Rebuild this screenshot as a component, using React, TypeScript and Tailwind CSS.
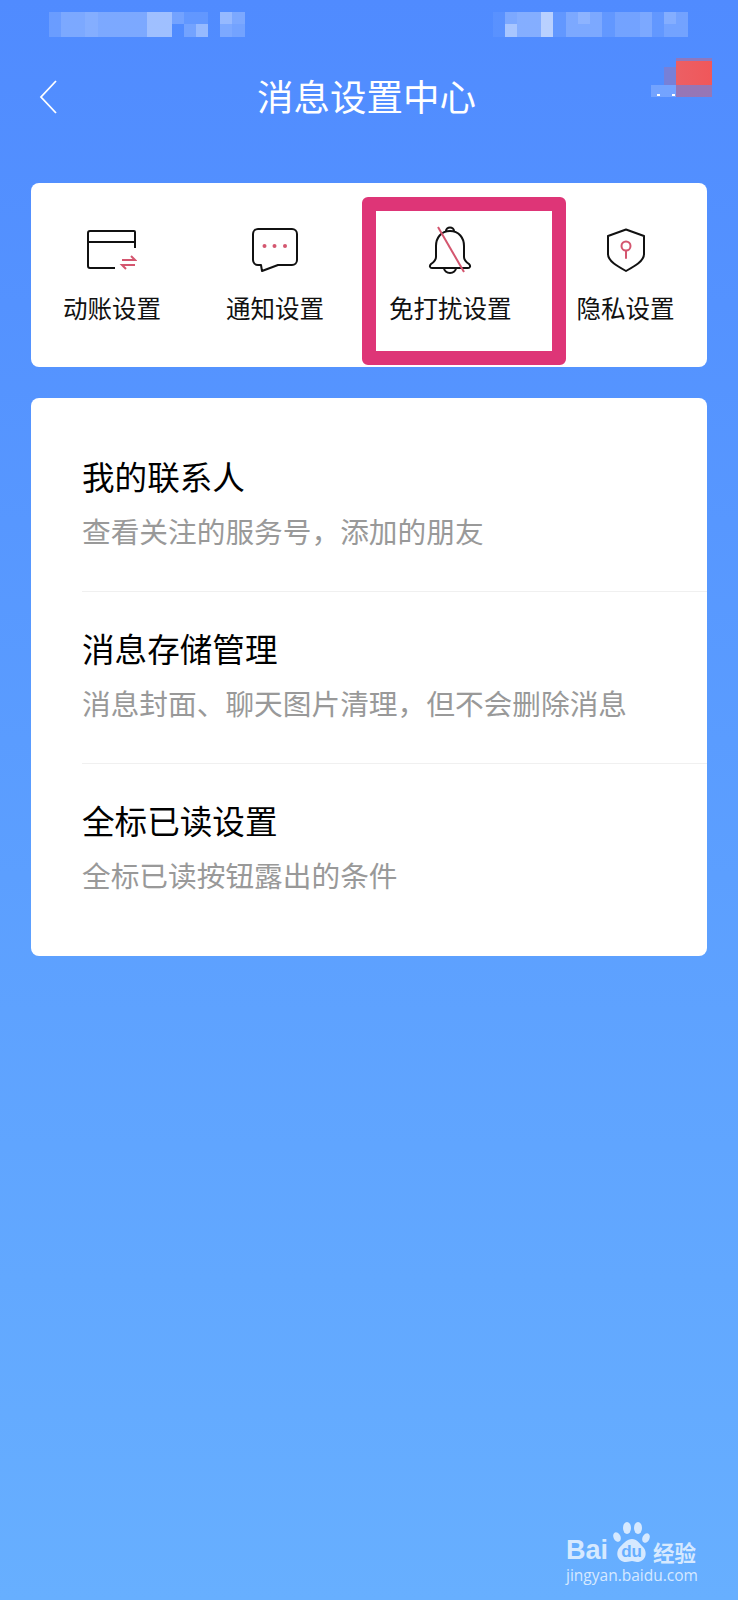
import React from 'react'

const font = { fontFamily: '"Noto Sans CJK SC", "Noto Sans", sans-serif' }
const latin = { fontFamily: '"Liberation Sans", sans-serif' }

// 状态栏马赛克：宽度、上半格、下半格
const leftMosaic = [
  ['w-[12px]', 'bg-white/15', 'bg-white/15'],
  ['w-[24px]', 'bg-white/25', 'bg-white/25'],
  ['w-[13px]', 'bg-white/30', 'bg-white/30'],
  ['w-[49px]', 'bg-white/25', 'bg-white/25'],
  ['w-[25px]', 'bg-white/45', 'bg-white/45'],
  ['w-[12px]', 'bg-white/20', 'bg-white/0'],
  ['w-[12px]', 'bg-white/10', 'bg-white/20'],
  ['w-[12px]', 'bg-white/10', 'bg-white/40'],
  ['w-[12px]', 'bg-white/0', 'bg-white/0'],
  ['w-[12px]', 'bg-white/40', 'bg-white/25'],
  ['w-[13px]', 'bg-white/25', 'bg-white/20'],
]

const rightMosaic = [
  ['w-[12px]', 'bg-white/5', 'bg-white/5'],
  ['w-[12px]', 'bg-white/25', 'bg-white/50'],
  ['w-[24px]', 'bg-white/30', 'bg-white/30'],
  ['w-[12px]', 'bg-white/60', 'bg-white/60'],
  ['w-[13px]', 'bg-white/10', 'bg-white/10'],
  ['w-[12px]', 'bg-white/25', 'bg-white/25'],
  ['w-[12px]', 'bg-white/35', 'bg-white/25'],
  ['w-[12px]', 'bg-white/25', 'bg-white/25'],
  ['w-[13px]', 'bg-white/10', 'bg-white/10'],
  ['w-[25px]', 'bg-white/20', 'bg-white/20'],
  ['w-[12px]', 'bg-white/25', 'bg-white/25'],
  ['w-[12px]', 'bg-white/10', 'bg-white/10'],
  ['w-[12px]', 'bg-white/30', 'bg-white/20'],
  ['w-[12px]', 'bg-white/20', 'bg-white/20'],
]

const Mosaic: React.FC<{ cells: string[][] }> = ({ cells }) => (
  <div className="flex h-[25px]">
    {cells.map(([w, top, bottom], i) => (
      <div key={i} className={`flex flex-col ${w}`}>
        <span className={`h-[12px] ${top}`} />
        <span className={`h-[13px] ${bottom}`} />
      </div>
    ))}
  </div>
)

const CardIcon = () => (
  <svg width="50" height="40" viewBox="0 0 50 40" fill="none">
    <path d="M28 38H3a2 2 0 0 1-2-2V3a2 2 0 0 1 2-2h44a1 1 0 0 1 1 1v16" stroke="#111" strokeWidth="2" strokeLinejoin="round" />
    <path d="M1 12h47" stroke="#111" strokeWidth="2" />
    <path d="M35 30h13l-4-4M48 35H35l4 4" stroke="#d4566f" strokeWidth="2" />
  </svg>
)

const ChatIcon = () => (
  <svg width="46" height="44" viewBox="0 0 46 44" fill="none">
    <path d="M6 1h34a5 5 0 0 1 5 5v26a5 5 0 0 1-5 5H26L10 43l-1-6H6a5 5 0 0 1-5-5V6a5 5 0 0 1 5-5z" stroke="#111" strokeWidth="2" strokeLinejoin="round" />
    <circle cx="12.5" cy="18" r="2" fill="#d4566f" />
    <circle cx="22.5" cy="18" r="2" fill="#d4566f" />
    <circle cx="33" cy="18" r="2" fill="#d4566f" />
  </svg>
)

const BellIcon = () => (
  <svg width="46" height="48" viewBox="0 0 46 48" fill="none">
    <path d="M23 5C14 5 9 12 9 20v11c0 3-2 5-5 7-2 2-1 4 1 4h36c2 0 3-2 1-4-3-2-5-4-5-7V20C37 12 32 5 23 5z" stroke="#111" strokeWidth="2" strokeLinejoin="round" />
    <path d="M19 5a4 3.5 0 0 1 8 0" stroke="#111" strokeWidth="2" />
    <path d="M17 42a6 5 0 0 0 12 0" stroke="#111" strokeWidth="2" />
    <path d="M11 1l26 45" stroke="#d4566f" strokeWidth="2" />
  </svg>
)

const ShieldIcon = () => (
  <svg width="40" height="44" viewBox="0 0 40 44" fill="none">
    <path d="M20 1.5L38 8v18c0 7-9 12-18 17C11 38 2 33 2 26V8z" stroke="#111" strokeWidth="2" strokeLinejoin="round" />
    <circle cx="20" cy="18" r="4.5" stroke="#d4566f" strokeWidth="2" />
    <path d="M20 23v7" stroke="#d4566f" strokeWidth="2" strokeLinecap="round" />
  </svg>
)

const shortcuts = [
  { label: '动账设置', icon: <CardIcon /> },
  { label: '通知设置', icon: <ChatIcon /> },
  { label: '免打扰设置', icon: <BellIcon /> },
  { label: '隐私设置', icon: <ShieldIcon /> },
]

const rows = [
  { title: '我的联系人', desc: '查看关注的服务号，添加的朋友' },
  { title: '消息存储管理', desc: '消息封面、聊天图片清理，但不会删除消息' },
  { title: '全标已读设置', desc: '全标已读按钮露出的条件' },
]

const App: React.FC = () => {
  return (
    <div className="relative h-[1600px] w-[738px] overflow-hidden bg-gradient-to-b from-[#508bff] to-[#67afff]" style={font}>
      {/* 状态栏 */}
      <div className="flex justify-between pl-[49px] pr-[50px] pt-[12px]">
        <Mosaic cells={leftMosaic} />
        <Mosaic cells={rightMosaic} />
      </div>

      {/* 顶部导航 */}
      <div className="mt-[21px] flex h-[62px] items-start pl-[38px]">
        <svg className="mt-[22px]" width="20" height="34" viewBox="0 0 20 34" fill="none">
          <path d="M18 1L3 17l15 16" stroke="#fff" strokeWidth="1.8" />
        </svg>
        <span className="ml-[199px] mt-[14px] text-[36.5px] leading-[48px] text-white">消息设置中心</span>
        <div className="ml-[175px] flex w-[61px] flex-col">
          <span className="ml-[25px] h-[3px] w-[36px] bg-[#ec5a5e]/40" />
          <div className="flex h-[24px]">
            <span className="ml-[13px] mt-[6px] w-[12px] bg-[#ec5a5e]/25" />
            <span className="w-[36px] bg-gradient-to-r from-[#ec5f64] to-[#f0575a]" />
          </div>
          <div className="flex h-[12px]">
            <div className="flex w-[25px] items-end justify-between bg-white/20 px-[6px] pb-[1px]">
              <span className="h-[2px] w-[3px] bg-white" />
              <span className="h-[2px] w-[3px] translate-x-[5px] bg-white" />
            </div>
            <span className="w-[36px] bg-[#ec5a5e]/45" />
          </div>
        </div>
      </div>

      {/* 快捷入口 */}
      <div className="relative mx-[31px] mt-[63px] flex h-[184px] gap-[65px] rounded-[8px] bg-white pl-[32px] pt-[43px]">
        {shortcuts.map((s) => (
          <div key={s.label} className="flex flex-col items-center">
            <div className="flex h-[48px] items-center">{s.icon}</div>
            <div className="mt-[17px] whitespace-nowrap text-[24.5px] leading-[34px] text-[#111]">{s.label}</div>
          </div>
        ))}
        <div className="absolute left-[331px] top-[14px] h-[168px] w-[204px] rounded-[6px] border-[14px] border-[#de3577]" />
      </div>

      {/* 设置列表 */}
      <div className="mx-[31px] mt-[31px] h-[558px] rounded-[8px] bg-white pl-[51px] pt-[22px]">
        {rows.map((r, i) => (
          <div key={r.title} className={`h-[172px] pt-[33px] ${i < rows.length - 1 ? 'border-b border-[#f0f0f0]' : ''}`}>
            <div className="text-[32.6px] leading-[46px] text-black">{r.title}</div>
            <div className="mt-[12px] text-[28.7px] leading-[40px] text-[#999]">{r.desc}</div>
          </div>
        ))}
      </div>

      {/* 水印 */}
      <div className="absolute left-[566px] top-[1522px] flex w-[134px] flex-col text-[#d6e9ff]">
        <div className="flex items-end">
          <span className="mb-[-4px] text-[27px] font-bold leading-[32px]" style={latin}>Bai</span>
          <div className="relative ml-[5px] h-[40px] w-[37px]">
            <svg width="37" height="40" viewBox="0 0 37 40" fill="#d6e9ff">
              <ellipse cx="4" cy="15" rx="3.5" ry="5" transform="rotate(-25 4 15)" />
              <ellipse cx="14" cy="6" rx="4" ry="6" />
              <ellipse cx="25" cy="6" rx="4" ry="6" />
              <ellipse cx="33" cy="16" rx="3.5" ry="5" transform="rotate(25 33 16)" />
              <path d="M19 17c5 0 7 4 11 8 5 5 3 15-6 15-2 0-3-1-5-1s-3 1-6 1c-9 0-11-10-6-15 4-4 7-8 12-8z" />
            </svg>
            <span className="absolute inset-x-0 bottom-[1px] text-center text-[17px] font-bold leading-[18px] text-[#66aeff]" style={latin}>du</span>
          </div>
          <span className="mb-[-3px] ml-[3px] whitespace-nowrap text-[21.5px] font-bold leading-[26px]">经验</span>
        </div>
        <span className="mt-[3px] whitespace-nowrap text-[15.5px] leading-[20px]" style={{ fontFamily: '"Open Sans", sans-serif' }}>jingyan.baidu.com</span>
      </div>
    </div>
  )
}

export default App
